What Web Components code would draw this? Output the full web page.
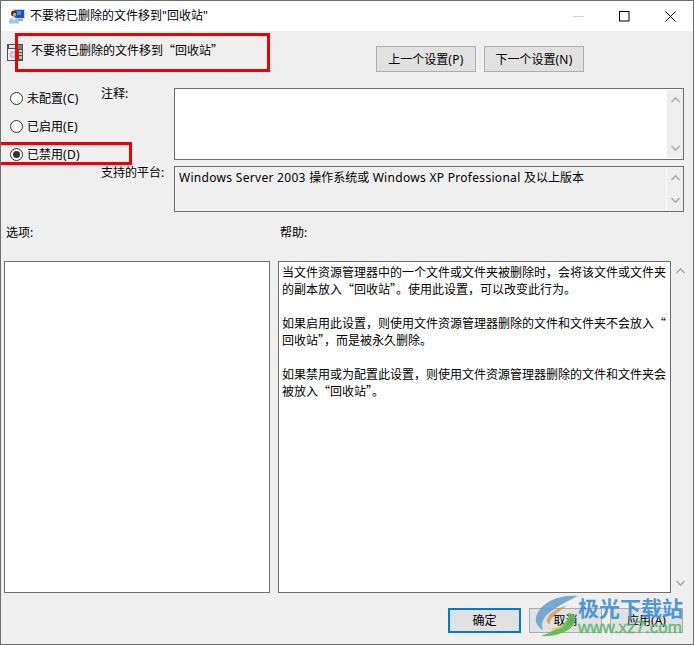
<!DOCTYPE html>
<html lang="zh-CN">
<head>
<meta charset="utf-8">
<title>不要将已删除的文件移到"回收站"</title>
<style>
    html, body { margin: 0; padding: 0; background: #fff; }
    body { font: 12px/17px "Noto Sans", "Noto Sans CJK SC", sans-serif; color: #000; }
    .q { font-family: "Noto Sans CJK SC", sans-serif; line-height: 0; }
    .la { letter-spacing: .3px; }
    text-panel div { height: 17px; }
</style>
</head>
<body>

<policy-dialog>
    <title-bar slot="title">不要将已删除的文件移到"回收站"</title-bar>

    <policy-header slot="header">
        不要将已删除的文件移到<span class="q">“</span>回收站<span class="q">”</span>
        <win-button slot="actions" width="100">上一个设置<span class="la">(P)</span></win-button>
        <win-button slot="actions" width="100">下一个设置<span class="la">(N)</span></win-button>
    </policy-header>

    <radio-list slot="radios">
        <win-radio>未配置<span class="la">(C)</span></win-radio>
        <win-radio>已启用<span class="la">(E)</span></win-radio>
        <win-radio checked>已禁用<span class="la">(D)</span></win-radio>
    </radio-list>

    <span slot="comment-label">注释:</span>
    <scroll-box slot="comment" style="height:72px"></scroll-box>

    <span slot="platform-label">支持的平台:</span>
    <scroll-box slot="platform" tone="flat" style="height:46px"><span class="la">Windows Server 2003 </span>操作系统或<span class="la"> Windows XP Professional </span>及以上版本</scroll-box>

    <span slot="options-label">选项:</span>
    <span slot="help-label">帮助:</span>

    <text-panel slot="options"></text-panel>
    <text-panel slot="help" scrollbar>
        <div>当文件资源管理器中的一个文件或文件夹被删除时，会将该文件或文件夹</div>
        <div>的副本放入<span class="q">“</span>回收站<span class="q">”</span>。使用此设置，可以改变此行为。</div>
        <div>&nbsp;</div>
        <div>如果启用此设置，则使用文件资源管理器删除的文件和文件夹不会放入<span class="q">“</span></div>
        <div>回收站<span class="q">”</span>，而是被永久删除。</div>
        <div>&nbsp;</div>
        <div>如果禁用或为配置此设置，则使用文件资源管理器删除的文件和文件夹会</div>
        <div>被放入<span class="q">“</span>回收站<span class="q">”</span>。</div>
    </text-panel>

    <win-button slot="footer" width="73" height="25" primary>确定</win-button>
    <win-button slot="footer" width="73" height="25">取消</win-button>
    <win-button slot="footer" width="73" height="25">应用(A)</win-button>

    <red-mark slot="overlay" style="left:15px;top:33px;width:255px;height:39px"></red-mark>
    <red-mark slot="overlay" style="left:-4px;top:142px;width:136px;height:23px"></red-mark>
    <site-watermark slot="overlay"></site-watermark>
</policy-dialog>

<script>
const chevron = (dir) => `<svg width="11" height="7" viewBox="0 0 11 7" fill="none" stroke="#a8a8a8" stroke-width="1.6">
    <path d="${dir === 'up' ? 'M1.5 6 5.5 1.8 9.5 6' : 'M1.5 1 5.5 5.2 9.5 1'}"/></svg>`;

class PolicyDialog extends HTMLElement {
    connectedCallback() {
        this.attachShadow({ mode: 'open' });
        this.shadowRoot.innerHTML = `
            <style>
                :host {
                    display: block;
                    position: relative;
                    box-sizing: border-box;
                    width: 694px;
                    height: 645px;
                    border: 1px solid #6e6e6e;
                    background: #efefef;
                    overflow: hidden;
                }
                .fields {
                    display: grid;
                    grid-template-columns: 100px 73px 510px;
                    grid-template-rows: 72px 46px;
                    row-gap: 6px;
                }
                .radios { grid-row: 1 / 3; }
                .field-label { margin-top: -3px; }
                .field-label.second { margin-top: -2px; }
                .labels {
                    display: flex;
                    height: 49px;
                    box-sizing: border-box;
                    padding: 12px 0 0 5px;
                }
                .labels .left { width: 274px; }
                .panels {
                    display: flex;
                    gap: 8px;
                    padding-left: 3px;
                    height: 332px;
                }
                .footer {
                    display: flex;
                    justify-content: flex-end;
                    gap: 8px;
                    padding: 15px 10px 0 0;
                }
            </style>
            <slot name="title"></slot>
            <slot name="header"></slot>
            <div class="fields">
                <div class="radios"><slot name="radios"></slot></div>
                <div class="field-label"><slot name="comment-label"></slot></div>
                <slot name="comment"></slot>
                <div class="field-label second"><slot name="platform-label"></slot></div>
                <slot name="platform"></slot>
            </div>
            <div class="labels">
                <div class="left"><slot name="options-label"></slot></div>
                <div><slot name="help-label"></slot></div>
            </div>
            <div class="panels">
                <slot name="options"></slot>
                <slot name="help"></slot>
            </div>
            <div class="footer"><slot name="footer"></slot></div>
            <slot name="overlay"></slot>
        `;
    }
}

class TitleBar extends HTMLElement {
    connectedCallback() {
        this.attachShadow({ mode: 'open' });
        this.shadowRoot.innerHTML = `
            <style>
                :host {
                    display: flex;
                    align-items: center;
                    height: 30px;
                    background: #fff;
                    padding-left: 8px;
                }
                svg.app { margin-right: 5px; flex: none; }
                .text { flex: 1; padding-bottom: 1px; }
                .ctl {
                    width: 46px;
                    height: 30px;
                    display: flex;
                    align-items: center;
                    justify-content: center;
                }
            </style>
            <svg class="app" width="16" height="16" viewBox="0 0 16 16">
                <rect x="5" y="1" width="11" height="10" fill="#c8d4e8"/>
                <rect x="6" y="2" width="9" height="8" fill="#1b4fc4"/>
                <rect x="7" y="3" width="5" height="4" fill="#3f8cf0"/>
                <rect x="9" y="11" width="5" height="2" fill="#9aa6b4"/>
                <circle cx="5" cy="5.500" r="3" fill="#4a2f1c"/>
                <circle cx="5.500" cy="6.500" r="1.800" fill="#d8a07c"/>
                <path d="M0 15.500c0-4.500 2-6 5-6s5 1.500 5 6z" fill="#a4c4de"/>
                <path d="M3 10h4l-2 3z" fill="#e8f0f8"/>
            </svg>
            <div class="text"><slot></slot></div>
            <div class="ctl"><svg width="11" height="1"><rect width="11" height="1" fill="#cfcfcf"/></svg></div>
            <div class="ctl"><svg width="11" height="11"><rect x=".5" y=".5" width="9.500" height="9.500" fill="none" stroke="#000"/></svg></div>
            <div class="ctl"><svg width="11" height="11" fill="none" stroke="#000"><path d="M.5.500 10.500 10.500M10.500.500 .5 10.500"/></svg></div>
        `;
    }
}

class PolicyHeader extends HTMLElement {
    connectedCallback() {
        this.attachShadow({ mode: 'open' });
        this.shadowRoot.innerHTML = `
            <style>
                :host {
                    display: flex;
                    box-sizing: border-box;
                    height: 57px;
                    padding: 13px 109px 0 6px;
                }
                svg { flex: none; margin-right: 8px; }
                .text { flex: 1; margin-top: -2px; }
                .actions { display: flex; gap: 8px; margin-top: 2px; align-self: flex-start; }
            </style>
            <svg width="16" height="17" viewBox="0 0 16 17">
                <rect width="16" height="17" fill="#3f5660"/>
                <rect x="2" y="1" width="9" height="3" fill="#dfe3e0"/>
                <rect x="11" y="1" width="4" height="4" fill="#5f8a94"/>
                <rect x="1" y="5" width="10" height="11" fill="#ecece8"/>
                <circle cx="6" cy="10.500" r="3.500" fill="#b4c4d8"/>
                <circle cx="6" cy="10.500" r="1" fill="#fff"/>
                <rect x="12" y="6" width="3" height="2" fill="#e4cc66"/>
                <rect x="12" y="9" width="3" height="2" fill="#d8c47c"/>
                <rect x="12" y="12" width="3" height="3" fill="#c4b878"/>
            </svg>
            <div class="text"><slot></slot></div>
            <div class="actions"><slot name="actions"></slot></div>
        `;
    }
}

class WinButton extends HTMLElement {
    connectedCallback() {
        this.attachShadow({ mode: 'open' });
        const width = this.getAttribute('width') || 73;
        const height = this.getAttribute('height') || 26;
        this.shadowRoot.innerHTML = `
            <style>
                :host {
                    display: flex;
                    align-items: center;
                    justify-content: center;
                    box-sizing: border-box;
                    width: ${width}px;
                    height: ${height}px;
                    background: #e1e1e1;
                    border: 1px solid #adadad;
                }
                :host([primary]) { border: 2px solid #0078d7; }
            </style>
            <span><slot></slot></span>
        `;
    }
}

class RadioList extends HTMLElement {
    connectedCallback() {
        this.attachShadow({ mode: 'open' });
        this.shadowRoot.innerHTML = `
            <style>
                :host {
                    display: flex;
                    flex-direction: column;
                    gap: 14px;
                    padding: 3px 0 0 9px;
                }
            </style>
            <slot></slot>
        `;
    }
}

class WinRadio extends HTMLElement {
    connectedCallback() {
        this.attachShadow({ mode: 'open' });
        this.shadowRoot.innerHTML = `
            <style>
                :host { display: flex; align-items: center; height: 14px; gap: 4px; }
                .dot {
                    box-sizing: border-box;
                    width: 13px;
                    height: 13px;
                    border: 1px solid #333;
                    border-radius: 50%;
                    background: #fff;
                    display: flex;
                    align-items: center;
                    justify-content: center;
                }
                .label { padding-top: 1px; }
                :host([checked]) .dot::after {
                    content: "";
                    width: 7px;
                    height: 7px;
                    border-radius: 50%;
                    background: #333;
                }
            </style>
            <span class="dot"></span><span class="label"><slot></slot></span>
        `;
    }
}

class ScrollBox extends HTMLElement {
    connectedCallback() {
        this.attachShadow({ mode: 'open' });
        this.shadowRoot.innerHTML = `
            <style>
                :host {
                    display: flex;
                    box-sizing: border-box;
                    border: 1px solid #6e6e6e;
                    background: #fff;
                }
                :host([tone="flat"]) { background: #efefef; }
                .body { flex: 1; padding: 2px 4px; }
                .bar {
                    width: 17px;
                    margin: 1px 0;
                    background: #eeeeee;
                    border-left: 1px solid #fff;
                    display: flex;
                    flex-direction: column;
                    align-items: center;
                    justify-content: space-between;
                    padding: 6px 0;
                    box-sizing: border-box;
                }
            </style>
            <div class="body"><slot></slot></div>
            <div class="bar">${chevron('up')}${chevron('down')}</div>
        `;
    }
}

class TextPanel extends HTMLElement {
    connectedCallback() {
        this.attachShadow({ mode: 'open' });
        const bar = this.hasAttribute('scrollbar');
        this.shadowRoot.innerHTML = `
            <style>
                :host {
                    display: flex;
                    height: 332px;
                    width: ${bar ? 412 : 266}px;
                }
                .body {
                    box-sizing: border-box;
                    flex: 1;
                    background: #fff;
                    border: 1px solid #6e6e6e;
                    padding: 2px 3px;
                }
                .bar {
                    width: 19px;
                    display: flex;
                    flex-direction: column;
                    align-items: center;
                    justify-content: space-between;
                    padding: 6px 0;
                    box-sizing: border-box;
                }
            </style>
            <div class="body"><slot></slot></div>
            ${bar ? `<div class="bar">${chevron('up')}${chevron('down')}</div>` : ''}
        `;
    }
}

class RedMark extends HTMLElement {
    connectedCallback() {
        this.attachShadow({ mode: 'open' });
        this.shadowRoot.innerHTML = `
            <style>
                :host {
                    display: block;
                    position: absolute;
                    box-sizing: border-box;
                    border: 3px solid #f00000;
                    margin: -1px;
                }
            </style>
        `;
    }
}

class SiteWatermark extends HTMLElement {
    connectedCallback() {
        this.attachShadow({ mode: 'open' });
        this.shadowRoot.innerHTML = `
            <style>
                :host {
                    display: flex;
                    position: absolute;
                    left: 534px;
                    top: 594px;
                    pointer-events: none;
                }
                .words { display: flex; flex-direction: column; }
                .name {
                    font: 700 21px/24px "Noto Sans CJK SC", sans-serif;
                    color: #3d8fd6;
                    opacity: .9;
                }
                .url {
                    font: 400 17px/17px "Liberation Sans", sans-serif;
                    -webkit-text-stroke: .4px #4fb56b;
                    color: #4fb56b;
                    opacity: .85;
                }
            </style>
            <svg width="43" height="42" viewBox="0 0 43 42">
                <path d="M43 1C26-1 8 6 2 19c-3 7 0 13 6 16-3-8 2-15 10-20C25 10 34 5 43 1z" fill="#6aa0d0" opacity=".9"/>
                <path d="M32 11c-9 1-18 7-20 13-1 3 1 5 3 5-1-5 7-12 17-18z" fill="#d88a3c" opacity=".7"/>
                <path d="M6 41c14 1 30-4 34-14 2-5-2-9-7-9 2 6-4 12-12 16-5 3-10 5-15 7z" fill="#5cb84c" opacity=".9"/>
                <path d="M14 33c6 1 14-1 18-6-3 6-11 10-18 6z" fill="#d8d23c"/>
            </svg>
            <div class="words">
                <div class="name">极光下载站</div>
                <div class="url">www.xz7.com</div>
            </div>
        `;
    }
}

customElements.define('policy-dialog', PolicyDialog);
customElements.define('title-bar', TitleBar);
customElements.define('policy-header', PolicyHeader);
customElements.define('win-button', WinButton);
customElements.define('radio-list', RadioList);
customElements.define('win-radio', WinRadio);
customElements.define('scroll-box', ScrollBox);
customElements.define('text-panel', TextPanel);
customElements.define('red-mark', RedMark);
customElements.define('site-watermark', SiteWatermark);
</script>
</body>
</html>
